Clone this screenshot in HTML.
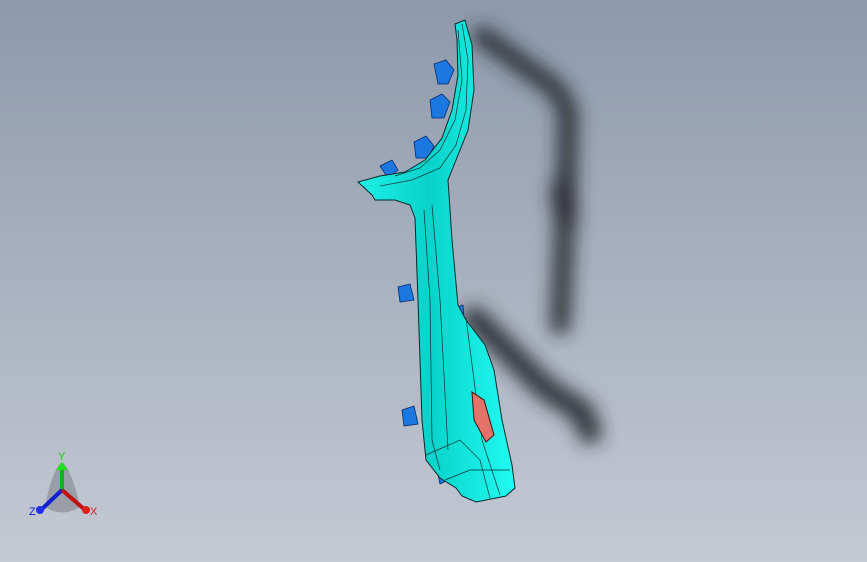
<!DOCTYPE html>
<html><head><style>
html,body{margin:0;padding:0}
body{width:867px;height:562px;overflow:hidden;background:linear-gradient(#8d99ac 0%,#a6afbe 45%,#c4c9d3 100%);position:relative;font-family:"Liberation Sans",sans-serif}
svg{position:absolute;left:0;top:0}
</style></head><body>
<svg width="867" height="562" viewBox="0 0 867 562">
<defs>
<filter id="b" x="-50%" y="-50%" width="200%" height="200%"><feGaussianBlur stdDeviation="9"/></filter>
<linearGradient id="c" x1="0" x2="1"><stop offset="0" stop-color="#1ff0e8"/><stop offset="0.45" stop-color="#08d2ca"/><stop offset="1" stop-color="#20fbf2"/></linearGradient>
</defs>
<g filter="url(#b)" stroke="#25282e" stroke-opacity="0.9" fill="none" stroke-linecap="round" stroke-linejoin="round">
<path d="M482 36 L555 88 L568 110 L566 200 L560 325" stroke-width="20"/>
<path d="M474 318 L545 388 L582 412 L590 432" stroke-width="24"/>
<path d="M562 190 L566 215" stroke-width="24"/>
</g>
<!-- blue clips -->
<g fill="#1a78e0" stroke="#0a2a6a" stroke-width="0.8">
<path d="M434 64 L446 60 L454 70 L448 84 L438 84 Z"/>
<path d="M430 100 L442 94 L450 102 L444 118 L432 118 Z"/>
<path d="M414 142 L426 136 L434 146 L428 158 L416 158 Z"/>
<path d="M380 166 L392 160 L398 170 L388 178 Z"/>
<path d="M398 287 L410 284 L414 300 L400 302 Z"/>
<path d="M402 410 L414 406 L418 424 L404 426 Z"/>
<path d="M436 465 L448 462 L452 478 L440 484 Z"/>
<path d="M457 307 L463 305 L465 330 L459 332 Z"/>
</g>
<!-- main part -->
<path d="M455 24 L465 20 L472 45 L474 90 L468 130 L456 160 L448 180 L452 240 L458 305 L466 320 L485 345 L494 370 L502 420 L512 465 L515 488 L506 496 L476 502 L462 496 L456 488 L440 478 L426 460 L422 420 L418 300 L415 218 L410 205 L395 200 L375 200 L372 195 L358 182 L380 176 L405 172 L425 160 L442 138 L452 110 L458 75 L457 40 Z" fill="url(#c)" stroke="#062a2a" stroke-width="1"/>
<g fill="none" stroke="#063030" stroke-width="0.7">
<path d="M462 24 L468 60 L466 110 L456 145 L440 168 L412 180 L380 186"/>
<path d="M458 30 L462 80 L455 120 L440 150 L420 168 L395 176"/>
<path d="M424 210 L430 300 L432 440 L440 470"/>
<path d="M432 205 L440 300 L448 450"/>
<path d="M466 318 L474 380 L482 440 L500 495"/>
<path d="M426 455 L460 440 L480 460 L490 498"/>
<path d="M445 480 L470 470 L510 470"/>
</g>
<path d="M472 392 L484 400 L494 435 L486 442 L474 420 Z" fill="#e57268" stroke="#3a1010" stroke-width="1"/>
</svg>
<svg width="867" height="562">
<path d="M45 507 Q52 470 62 462 Q72 470 80 507 Q62 518 45 507 Z" fill="#6e7278" opacity="0.45"/>
<line x1="62" y1="490" x2="62" y2="468" stroke="#18b018" stroke-width="4"/>
<path d="M56 470 L62 462 L68 470 Z" fill="#20e020"/>
<line x1="62" y1="490" x2="42" y2="509" stroke="#1020d0" stroke-width="4"/>
<circle cx="40" cy="510" r="4" fill="#2030f0"/>
<line x1="62" y1="490" x2="84" y2="509" stroke="#c01010" stroke-width="4"/>
<circle cx="86" cy="510" r="4" fill="#e02020"/>
<text x="58" y="460" font-size="11" fill="#10d010">Y</text>
<text x="29" y="515" font-size="11" fill="#1020e0">Z</text>
<text x="90" y="515" font-size="11" fill="#e02020">X</text>
</svg>
</body></html>
